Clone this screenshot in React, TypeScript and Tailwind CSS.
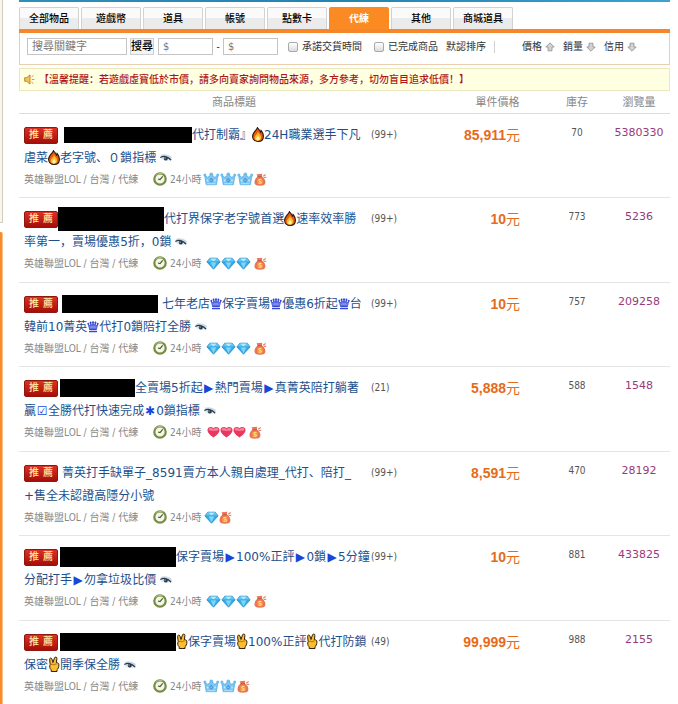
import type { ReactNode } from "react";

// Item listing for the boosting category: tabs, filter bar, notice, table.

const BODY_FONT = "font-['DejaVu_Sans_Condensed','Noto_Sans_CJK_SC',sans-serif]";
const TITLE_FONT = "font-['DejaVu_Sans','Noto_Sans_CJK_SC',sans-serif]";

type Rank = "crown" | "diamond" | "heart";

type Item = {
  bar?: string;
  line1: string;
  line2: string;
  watched: boolean;
  count: string;
  rank: Rank;
  level: number;
  rankWidth: string;
  price: string;
  stock: number;
  views: number;
};

const TABS = ["全部物品", "遊戲幣", "道具", "帳號", "點數卡", "代練", "其他", "商城道具"];
const ACTIVE_TAB = "代練";

const ITEMS: Item[] = [
  {
    bar: "ml-1.5 h-4 w-32",
    line1: "代打制霸』🔥24H職業選手下凡",
    line2: "虐菜🔥老字號、０鎖指標",
    watched: true,
    count: "(99+)",
    rank: "crown",
    level: 3,
    rankWidth: "w-[51px]",
    price: "85,911",
    stock: 70,
    views: 5380330,
  },
  {
    bar: "h-6 w-[106px]",
    line1: "代打界保字老字號首選🔥速率效率勝",
    line2: "率第一，賣場優惠5折，0鎖",
    watched: true,
    count: "(99+)",
    rank: "diamond",
    level: 3,
    rankWidth: "w-[51px]",
    price: "10",
    stock: 773,
    views: 5236,
  },
  {
    bar: "ml-1 mr-1 h-[18px] w-24",
    line1: "七年老店♛保字賣場♛優惠6折起♛台",
    line2: "韓前10菁英♛代打0鎖陪打全勝",
    watched: true,
    count: "(99+)",
    rank: "diamond",
    level: 3,
    rankWidth: "w-[51px]",
    price: "10",
    stock: 757,
    views: 209258,
  },
  {
    bar: "ml-0.5 h-[18px] w-[75px]",
    line1: "全賣場5折起▶熱門賣場▶真菁英陪打躺著",
    line2: "贏☑全勝代打快速完成✱0鎖指標",
    watched: true,
    count: "(21)",
    rank: "heart",
    level: 3,
    rankWidth: "w-[46px]",
    price: "5,888",
    stock: 588,
    views: 1548,
  },
  {
    line1: "菁英打手缺單子_8591賣方本人親自處理_代打、陪打_",
    line2: "+售全未認證高隱分小號",
    watched: false,
    count: "(99+)",
    rank: "diamond",
    level: 1,
    rankWidth: "w-4",
    price: "8,591",
    stock: 470,
    views: 28192,
  },
  {
    bar: "ml-0.5 h-5 w-[116px]",
    line1: "保字賣場▶100%正評▶0鎖▶5分鐘",
    line2: "分配打手▶勿拿垃圾比價",
    watched: true,
    count: "(99+)",
    rank: "diamond",
    level: 3,
    rankWidth: "w-[51px]",
    price: "10",
    stock: 881,
    views: 433825,
  },
  {
    bar: "ml-0.5 h-[18px] w-[116px]",
    line1: "✌保字賣場✌100%正評✌代打防鎖",
    line2: "保密✌開季保全勝",
    watched: true,
    count: "(49)",
    rank: "crown",
    level: 2,
    rankWidth: "w-[34px]",
    price: "99,999",
    stock: 988,
    views: 2155,
  },
];

function FireIcon() {
  return (
    <svg viewBox="0 0 12 16" className="inline-block h-4 w-3 align-[-3px]" aria-hidden="true">
      <path d="M5.600 1C6.200 3.600 8 4.400 8.600 6.200c.5-.4.6-1 .6-1.600 1.400 1.600 2.300 3.600 2.200 5.800-.1 3-2.200 5-5.300 5S.7 13.300.6 10.500C.5 8.500 1.600 7 2.600 5.700 3.800 4.200 5.300 3.200 5.600 1Z" fill="#ea5a10" stroke="#2b1408" strokeWidth="1.100" />
      <path d="M6 5.800c.3 1.800 3.200 3 3.200 5.800 0 1.800-1.300 3.100-3.200 3.100s-3.300-1.300-3.300-3C2.700 9.600 5.500 8.500 6 5.800Z" fill="#ffbd2a" />
      <path d="M6 9.500c.2 1 1.700 2 1.700 3.300 0 1-.7 1.600-1.700 1.600s-1.800-.6-1.800-1.600C4.200 11.800 5.700 11 6 9.500Z" fill="#fff3a0" />
    </svg>
  );
}

function HandIcon() {
  return (
    <svg viewBox="0 0 12 16" className="inline-block h-4 w-3 align-[-3px]" aria-hidden="true">
      <path d="M2.200 8.500 1.600 3.500c-.2-1.500 1.900-2 2.300-.5L5 6.500l1.500-4.700C7 .500 9.200.900 8.900 2.500L8.400 6.800c1.700-.2 2.600.8 2.500 2.300-.1 2.300-.7 3.700-1.900 4.600v1.800H3.200v-1.700C1.600 12.500 1.300 10.500 2.200 8.500Z" fill="#fcbd2e" stroke="#33200a" strokeWidth="1" strokeLinejoin="round" />
      <path d="M2.900 8.800c1.200-.9 2.500-.7 3.100.3.500-.9 1.600-1.300 2.400-.8" fill="none" stroke="#7d500f" strokeWidth=".7" />
    </svg>
  );
}

function QueenIcon() {
  return (
    <svg viewBox="0 0 12 12" className="inline-block size-3 align-[-2px]" aria-hidden="true">
      <path d="M2.500 8 1.300 3.300l1.900 2L3.600 2l1.500 2.900L6 1.700l.9 3.200L8.400 2l.4 3.300 1.900-2L9.500 8Z" fill="#7c8bec" stroke="#3448d6" strokeWidth=".8" strokeLinejoin="round" />
      <g fill="#3448d6">
        <circle cx="1.300" cy="2.800" r="1" />
        <circle cx="3.600" cy="1.500" r="1" />
        <circle cx="6" cy="1.200" r="1" />
        <circle cx="8.400" cy="1.500" r="1" />
        <circle cx="10.700" cy="2.800" r="1" />
      </g>
      <path d="M2.300 8.700h7.400M2 10.700h8" stroke="#3448d6" strokeWidth="1.200" />
    </svg>
  );
}

function EyeIcon() {
  return (
    <svg viewBox="0 0 12 10" className="ml-1 inline-block h-2.5 w-3 align-[-1px]" aria-hidden="true">
      <path d="M.3 2.200C3 .700 8 .700 11.700 4l-.4 4.500L9 6Z" fill="#c9d9e5" />
      <path d="M.5 5.200C2.500 2.800 8 2.400 10.500 6.800 7.500 9 3 8.200.500 5.200Z" fill="#dbe9f2" />
      <path d="M.3 4.500C3 2.900 7.500 2.700 11 7" fill="none" stroke="#2d3b48" strokeWidth="1.300" />
      <circle cx="5.800" cy="5.500" r="2" fill="#26394b" />
      <circle cx="5.100" cy="5" r=".6" fill="#fff" />
    </svg>
  );
}

function ClockIcon() {
  return (
    <svg viewBox="0 0 14 14" className="size-3.5" aria-hidden="true">
      <circle cx="7" cy="7" r="5.700" fill="#f4f6ea" stroke="#758c42" strokeWidth="2.200" />
      <path d="M2.500 3.800A5.700 5.700 0 0 1 10 2.200" fill="none" stroke="#b0c184" strokeWidth="1" />
      <path d="M9.700 4.300 7 7.600 5 7" fill="none" stroke="#4a5a2a" strokeWidth="1.200" />
    </svg>
  );
}

function RankIcon({ rank }: { rank: Rank }) {
  if (rank === "crown") {
    return (
      <svg viewBox="0 0 17 14" className="h-3.5 w-[17px]" aria-hidden="true">
        <path d="M1.700 3.500 4.800 5.300 8.300 2.500l3.500 2.800 3.100-1.800-1.500 9.200H3.200Z" fill="#7cc6f3" stroke="#58aee6" strokeWidth=".8" strokeLinejoin="round" />
        <g fill="#6cbdf0">
          <circle cx="1.900" cy="3" r="1.500" />
          <circle cx="8.300" cy="2.200" r="1.800" />
          <circle cx="14.700" cy="3" r="1.500" />
        </g>
        <path d="m8.300 5.800 2.200 2.500-2.200 2.500-2.200-2.500Z" fill="#3d93d8" />
        <path d="M7.300 8.200h2" stroke="#bfe6fb" strokeWidth=".8" />
        <path d="M4.200 11.700h8.200" stroke="#b5e2fb" />
        <circle cx="4.600" cy="8.500" r=".9" fill="#c9ebfd" />
        <circle cx="12" cy="8.500" r=".9" fill="#c9ebfd" />
      </svg>
    );
  }
  if (rank === "diamond") {
    return (
      <svg viewBox="0 0 15 13" className="h-[13px] w-[15px]" aria-hidden="true">
        <path d="M3.800 1.200h7.400l2.900 3.700-6.600 7.300L.900 4.900Z" fill="#36aee8" stroke="#2289c9" strokeWidth=".8" />
        <path d="M3.800 1.600 7.500 4.900H1.400ZM11.200 1.600 13.600 4.900H7.500Z" fill="#62c8f2" />
        <path d="M4 1.600h7L7.500 4.700Z" fill="#b5ebfd" />
        <path d="M4.500 5.100h6l-3 6.300Z" fill="#7bd6f8" />
        <path d="M1 4.900h13" stroke="#248ecf" strokeWidth=".6" />
      </svg>
    );
  }
  return (
    <svg viewBox="0 0 13 12" className="h-3 w-[13px]" aria-hidden="true">
      <path d="M6.500 11.500C4 9.500.500 7 .500 3.900.500.600 4.900-.100 6.500 2.300 8.100-.100 12.500.600 12.500 3.900c0 3.100-3.500 5.600-6 7.600Z" fill="#e8385f" />
      <path d="M1.700 4c0-1.700 1.200-2.500 2.500-2.200 1.200.2 1.800 1 2.300 1.900.5-.9 1.200-1.700 2.300-1.900 1.300-.2 2.500.500 2.500 2.200-1 1.200-8.600 1.200-9.600 0Z" fill="#f77f98" />
    </svg>
  );
}

function BagIcon() {
  return (
    <svg viewBox="0 0 13 13" className="size-[13px]" aria-hidden="true">
      <path d="M2.600 1.200 8.300.700l-.6 2.800c2.700 1.400 3.900 3.900 3.700 6.100-.2 2.300-1.700 3.100-5.400 3.100S.700 11.900.500 9.600c-.1-2.500 1.200-4.700 3.200-6Z" fill="#e8745a" />
      <path d="M3.300 3.700h4.800" stroke="#c2543f" strokeWidth=".9" />
      <path d="m9.200 3.200 2.500-1.700M9.700 4.500l2.600-.2" stroke="#e97960" strokeWidth="1.100" />
      <circle cx="6" cy="8.400" r="3.200" fill="#f68d45" />
      <path d="M7.500 6.900C6.300 6 4.600 6.400 4.800 7.500c.2 1.100 2.600.7 2.600 1.900 0 1-1.800 1.200-2.900.3" fill="none" stroke="#ffdf7a" strokeWidth="1.100" />
    </svg>
  );
}

function SpeakerIcon() {
  return (
    <svg viewBox="0 0 11 11" className="size-[11px]" aria-hidden="true">
      <path d="M.700 3.700h2L6 .900v9.200L2.700 7.300h-2Z" fill="#f6c453" stroke="#bd7c22" strokeWidth=".9" />
      <path d="m7.500 3 2-1.700M7.800 5.500h2.600M7.500 8l2 1.700" stroke="#d69a45" strokeWidth="1" />
    </svg>
  );
}

function SortArrow({ up }: { up?: boolean }) {
  return (
    <svg viewBox="0 0 10 10" className={up ? "size-2.5" : "size-2.5 rotate-180"} aria-hidden="true">
      <path d="M5 .8 9.200 5H7v3.800H3V5H.800Z" fill="#d2d2d2" stroke="#8e8e8e" strokeWidth=".8" />
    </svg>
  );
}

function renderTitle(text: string): ReactNode[] {
  return Array.from(text).map((ch, i) => {
    if (ch === "🔥") return <FireIcon key={i} />;
    if (ch === "✌") return <HandIcon key={i} />;
    if (ch === "♛") return <QueenIcon key={i} />;
    if ("▶☑✱".includes(ch)) {
      return (
        <span key={i} className="inline-block w-3 text-center text-[#1746d8]">
          {ch}
        </span>
      );
    }
    return ch;
  });
}

function ItemRow({ item }: { item: Item }) {
  return (
    <tr className="group h-[84px] align-top last:h-auto even:h-[85px]">
      <td className="border-b border-[#e4e4e4] pt-2.5 pl-[5px] group-last:border-0">
        <div className="grid grid-cols-[347px_auto] leading-[22px] whitespace-nowrap">
          <div className="flex h-[22px] items-center">
            <span className="flex h-[17px] w-[34px] shrink-0 items-center justify-center gap-1 rounded-[2px] border border-[#8f1710] bg-linear-to-b from-[#dc3023] to-[#a50d08] text-[10px] leading-none font-medium text-[#ffe9a8]">
              <span>推</span>
              <span>薦</span>
            </span>
            {item.bar ? <span className={`shrink-0 bg-black ${item.bar}`} /> : <span className="w-1" />}
            <a href="#" className={`text-[12px] text-[#1d4f8c] ${TITLE_FONT}`}>
              {renderTitle(item.line1)}
            </a>
          </div>
          <span className="text-[10px] text-[#555]">{item.count}</span>
        </div>
        <div className="h-[22px] leading-[22px] whitespace-nowrap">
          <a href="#" className={`text-[12px] text-[#1d4f8c] ${TITLE_FONT}`}>
            {renderTitle(item.line2)}
          </a>
          {item.watched && <EyeIcon />}
        </div>
        <div className="flex h-[22px] items-center text-[10px] text-[#888]">
          <span className="w-[129px] whitespace-nowrap">英雄聯盟LOL / 台灣 / 代練</span>
          <ClockIcon />
          <span className="ml-[3px] w-[33px] whitespace-nowrap">24小時</span>
          <span className={`flex justify-center ${item.rankWidth}`}>
            {Array.from({ length: item.level }, (_, i) => (
              <RankIcon key={i} rank={item.rank} />
            ))}
          </span>
          <BagIcon />
        </div>
      </td>
      <td className="border-b border-[#e4e4e4] pt-2.5 pr-[26px] text-right font-['Liberation_Sans','Noto_Sans_CJK_SC',sans-serif] text-[14px] leading-[22px] font-bold text-[#e56b1a] group-last:border-0">
        {item.price}
        <span className="font-normal">元</span>
      </td>
      <td className="border-b border-[#e4e4e4] pt-2 text-center text-[10px] leading-[22px] text-[#555] group-last:border-0">
        {item.stock}
      </td>
      <td className={`border-b border-[#e4e4e4] pt-2 text-center text-[11px] leading-[22px] text-[#983a7c] group-last:border-0 ${TITLE_FONT}`}>
        {item.views}
      </td>
    </tr>
  );
}

function FilterBar() {
  const box = "h-[17px] rounded-none border border-[#c4c4c4] bg-white px-1 text-[#444] placeholder:text-[#777]";
  const check =
    "size-2.5 appearance-none rounded-[2px] border border-[#a9a9a9] bg-linear-to-b from-white to-[#dcdcdc] checked:bg-[#888]";
  return (
    <form
      className="flex h-8 items-center border border-t-0 border-[#e9cfae] pl-[7px] text-[10px] whitespace-nowrap text-[#333]"
      onSubmit={(e) => e.preventDefault()}
    >
      <div className="flex items-center pb-1">
        <input aria-label="搜尋關鍵字" placeholder="搜尋關鍵字" className={`w-[100px] text-[11px] ${box}`} />
        <button type="submit" className="ml-[3px] h-[17px] w-6 border border-[#d0d0d0] bg-[#f3f3f3] text-[11px] leading-none font-medium text-black">
          搜尋
        </button>
        <input aria-label="最低價格" placeholder="$" className={`ml-1 w-[55px] text-[11px] ${box}`} />
        <span className="w-2.5 text-center">-</span>
        <input aria-label="最高價格" placeholder="$" className={`w-[55px] text-[11px] ${box}`} />
        <label className="ml-2.5 flex items-center gap-1">
          <input type="checkbox" className={check} />
          承諾交貨時間
        </label>
        <label className="ml-3 flex items-center gap-1">
          <input type="checkbox" className={check} />
          已完成商品
        </label>
        <a href="#" className="ml-2">默認排序</a>
        <span className="ml-2 h-3 w-px bg-[#d0d0d0]" />
        <div className="ml-[27px] flex items-center gap-2">
          <a href="#" className="flex items-center gap-[3px]">價格<SortArrow up /></a>
          <a href="#" className="flex items-center gap-[3px]">銷量<SortArrow /></a>
          <a href="#" className="flex items-center gap-[3px]">信用<SortArrow /></a>
        </div>
      </div>
    </form>
  );
}

export default function App() {
  return (
    <div className={`flex min-h-screen bg-white ${BODY_FONT}`}>
      <div className="flex w-[19px] shrink-0 flex-col">
        <div className="h-[223px] w-[3px] border-r border-b border-[#d3cdbb] bg-[#f8f6ee]" />
        <div className="mt-[9px] w-[3px] flex-1 rounded-tr-[2px] border-r border-[#fbc08a] bg-[#f98a2b]" />
      </div>

      <main className="mr-2 min-w-0 flex-1">
        <div className="h-0.5 bg-linear-to-r from-[#2f8fb8] via-[#2484b0] to-[#3ba3cc]" />

        <nav className="mt-[5px] flex h-[22px] gap-0.5">
          {TABS.map((tab) => (
            <button
              key={tab}
              type="button"
              className={
                tab === ACTIVE_TAB
                  ? "w-[60px] rounded-t-[2px] bg-[#fb8a22] text-[10px] font-bold text-white"
                  : "w-[60px] rounded-t-[2px] border border-b-0 border-[#d2d2d2] bg-linear-to-b from-[#fafafa] from-50% to-[#ebebeb] to-50% text-[10px] font-medium text-black"
              }
            >
              {tab}
            </button>
          ))}
        </nav>
        <div className="h-1 bg-[#f5862a]" />

        <FilterBar />

        <p className="mt-[3px] flex h-[23px] items-center gap-1 border border-[#ece7bd] bg-[#ffffe2] pl-1 text-[10px] font-medium whitespace-nowrap text-[#b01616]">
          <SpeakerIcon />
          【溫馨提醒：若遊戲虛寶低於市價，請多向賣家詢問物品來源，多方參考，切勿盲目追求低價！】
        </p>

        <table className="w-full table-fixed border-separate border-spacing-0">
          <thead>
            <tr className="h-[23px] text-[11px] leading-none text-[#888]">
              <th className="border-b border-[#dcdcdc] font-normal">商品標題</th>
              <th className="w-[97px] border-b border-[#dcdcdc] font-normal">單件價格</th>
              <th className="w-[62px] border-b border-[#dcdcdc] font-normal">庫存</th>
              <th className="w-[62px] border-b border-[#dcdcdc] font-normal">瀏覽量</th>
            </tr>
          </thead>
          <tbody>
            {ITEMS.map((item) => (
              <ItemRow key={item.views} item={item} />
            ))}
          </tbody>
        </table>
      </main>
    </div>
  );
}
